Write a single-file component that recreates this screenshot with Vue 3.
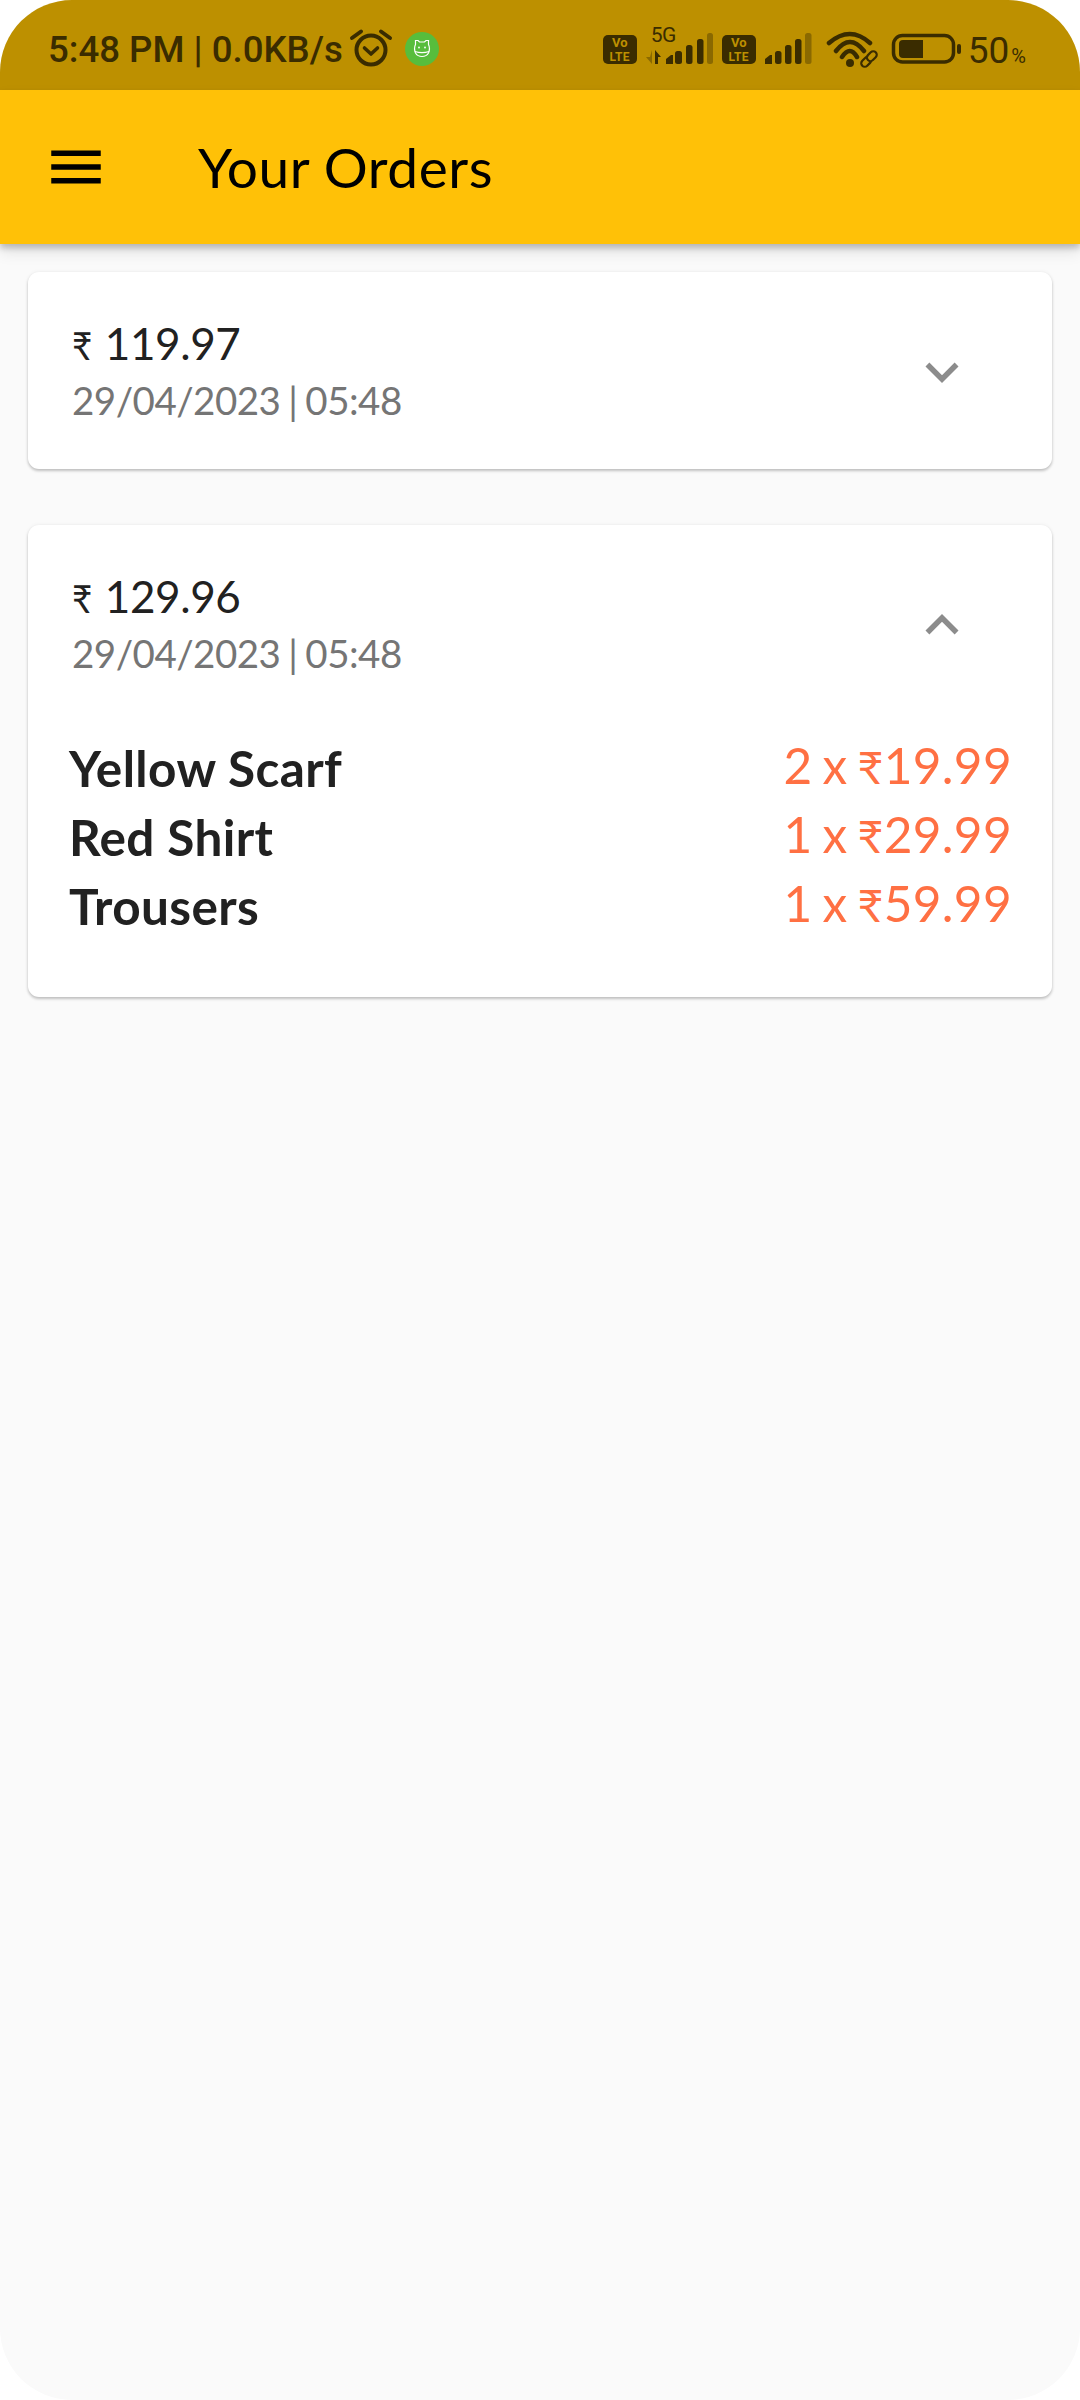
<script setup>
const orders = [
  { id: 1, amount: '119.97', date: '29/04/2023 | 05:48', open: false, items: [] },
  {
    id: 2, amount: '129.96', date: '29/04/2023 | 05:48', open: true,
    items: [
      { name: 'Yellow Scarf', qty: '2 x', price: '19.99' },
      { name: 'Red Shirt', qty: '1 x', price: '29.99' },
      { name: 'Trousers', qty: '1 x', price: '59.99' },
    ],
  },
]
</script>

<template>
  <div class="screen">
    <div class="status">
      <span class="clock">5:48 PM | 0.0KB/s</span>
      <svg class="alarm" viewBox="0 0 46 40" width="46" height="40">
        <circle cx="23" cy="22" r="14.5" fill="none" stroke="#3a2c00" stroke-width="4" />
        <path d="M16.5 20l6.5 6 6.5-6" fill="none" stroke="#3a2c00" stroke-width="3.6" stroke-linecap="round" stroke-linejoin="round" />
        <path d="M4 10L13 3.5M42 10L33 3.5" fill="none" stroke="#3a2c00" stroke-width="4" stroke-linecap="round" />
      </svg>
      <svg class="notif" viewBox="0 0 34 34" width="34" height="34">
        <circle cx="17" cy="17" r="17" fill="#57bd3c" />
        <path d="M10.500 12.500V8.500h2.500l1.500 1.500h5l1.500-1.500h2.500v4c1 2 1 6 0 8.500-1.500 2.500-3.500 3.500-6.500 3.500s-5-1-6.500-3.500c-1-2.500-1-6.500 0-8.500z" fill="none" stroke="#fff" stroke-width="1.200" />
        <path d="M9.800 19.500c4 1.300 10.400 1.300 14.400 0" fill="none" stroke="#fff" stroke-width="1.100" />
        <circle cx="14" cy="15.500" r="0.900" fill="#fff" />
        <circle cx="20" cy="15.500" r="0.900" fill="#fff" />
      </svg>

      <div class="status-right">
        <div class="volte"><span class="vo">Vo</span><span class="lte">LTE</span></div>
        <div class="signal-wrap">
          <span class="five-g">5G</span>
          <svg viewBox="0 0 67 34" width="67" height="34">
            <path d="M6 20v14L0 27h4z" fill="#8a6900" />
            <path d="M9 34V20l6 7h-3v7z" fill="#3a2c00" />
            <path d="M20 29l5-4h2v9h-7z" fill="#3a2c00" />
            <rect x="29" y="21" width="7" height="13" rx="2.500" fill="#3a2c00" />
            <rect x="40" y="15" width="6.500" height="19" rx="2.500" fill="#3a2c00" />
            <rect x="51" y="9" width="6.500" height="25" rx="2.500" fill="#3a2c00" />
            <rect x="61" y="3" width="6" height="31" rx="2.500" fill="#8a6900" />
          </svg>
        </div>
        <div class="volte"><span class="vo">Vo</span><span class="lte">LTE</span></div>
        <svg class="signal2" viewBox="0 0 47 34" width="47" height="34">
          <path d="M0 29l5-4h2v9H0z" fill="#3a2c00" />
          <rect x="10" y="21" width="6.500" height="13" rx="2.500" fill="#3a2c00" />
          <rect x="20" y="15" width="6.500" height="19" rx="2.500" fill="#3a2c00" />
          <rect x="30" y="9" width="6.500" height="25" rx="2.500" fill="#3a2c00" />
          <rect x="40" y="3" width="6.500" height="31" rx="2.500" fill="#8a6900" />
        </svg>
        <svg class="wifi" viewBox="0 0 56 40" width="56" height="40">
          <path d="M4 13Q25-5 45 13M11 21Q25 3 39 21M17 27Q25 15 32 27" fill="none" stroke="#3a2c00" stroke-width="4.500" stroke-linecap="round" />
          <circle cx="25" cy="33" r="4" fill="#3a2c00" />
          <g transform="rotate(-45 44 29)" fill="#bd9000" stroke="#3a2c00" stroke-width="2.200">
            <rect x="34.500" y="25.500" width="11" height="7" rx="3.500" />
            <rect x="42.500" y="25.500" width="11" height="7" rx="3.500" />
          </g>
        </svg>
        <svg class="battery" viewBox="0 0 71 34" width="71" height="34">
          <rect x="3.500" y="5.500" width="60" height="26.500" rx="9" fill="none" stroke="#3a2c00" stroke-width="3.500" />
          <path d="M13 10h20v18H13a4 4 0 0 1-4-4V14a4 4 0 0 1 4-4z" fill="#3a2c00" />
          <rect x="67" y="14" width="4" height="10" rx="2" fill="#3a2c00" />
        </svg>
        <span class="level">50<small>%</small></span>
      </div>
    </div>

    <header class="appbar">
      <svg class="menu" viewBox="0 0 24 24" width="66" height="66">
        <path d="M3 18h18v-2H3v2zm0-5h18v-2H3v2zm0-7v2h18V6H3z" fill="#000" />
      </svg>
      <h1 class="title">Your Orders</h1>
    </header>

    <main class="list">
      <section v-for="order in orders" :key="order.id" class="card">
        <div class="tile">
          <div class="tile-text">
            <div class="amount"><span class="rupee">₹</span> {{ order.amount }}</div>
            <div class="date">{{ order.date }}</div>
          </div>
          <svg class="chevron" viewBox="0 0 24 24" width="66" height="66">
            <path v-if="order.open" d="M12 8l-6 6 1.410 1.410L12 10.830l4.590 4.580L18 14z" fill="#8c8c8c" />
            <path v-else d="M16.590 8.590L12 13.170 7.410 8.590 6 10l6 6 6-6z" fill="#8c8c8c" />
          </svg>
        </div>
        <ul v-if="order.items.length" class="items">
          <li v-for="item in order.items" :key="item.name" class="item">
            <span class="item-name">{{ item.name }}</span>
            <span class="item-price">{{ item.qty }} <span class="rupee-lg">₹</span>{{ item.price }}</span>
          </li>
        </ul>
      </section>
    </main>
  </div>
</template>

<style scoped>
.screen {
  width: 1080px;
  height: 2400px;
  background: #fafafa;
  border-radius: 72px;
  overflow: hidden;
  font-family: Lato, "Noto Sans", sans-serif;
  position: relative;
}
.status {
  height: 90px;
  box-sizing: border-box;
  background: #bd9000;
  display: flex;
  align-items: center;
  padding: 8px 54px 0 48px;
  color: #3a2c00;
  font-family: Roboto, sans-serif;
}
.clock {
  font-size: 36.6px;
  font-weight: 500;
  white-space: nowrap;
}
.alarm {
  margin-left: 5px;
  flex: none;
  margin-top: -2px;
}
.notif {
  margin-left: 11px;
  flex: none;
}
.status-right {
  margin-left: auto;
  display: flex;
  align-items: flex-end;
  height: 34px;
  margin-top: -4px;
}
.volte {
  width: 34px;
  height: 29px;
  background: #3a2c00;
  border-radius: 5px;
  color: #bd9000;
  display: flex;
  flex-direction: column;
  align-items: center;
  justify-content: center;
  font-family: Roboto, sans-serif;
  font-weight: 700;
  line-height: normal;
  margin-right: 9px;
}
.vo { font-size: 13px; }
.lte { font-size: 12px; letter-spacing: 0.4px; }
.signal-wrap {
  position: relative;
  width: 67px;
  height: 34px;
  margin-right: 9px;
}
.signal-wrap svg { display: block; }
.five-g {
  position: absolute;
  left: 5px;
  top: -5px;
  font-size: 21px;
  line-height: 20px;
  letter-spacing: -0.5px;
}
.signal2 { margin-right: 13px; display: block; flex: none; }
.wifi { margin-right: 9px; margin-bottom: -6px; display: block; flex: none; }
.battery { margin-right: 7px; display: block; flex: none; }
.level {
  font-size: 37px;
  line-height: 30px;
  font-weight: 400;
  white-space: nowrap;
  margin-bottom: -7px;
}
.level small {
  font-size: 20px;
  margin-left: 2px;
}
.appbar {
  height: 154px;
  background: #ffc107;
  box-shadow: 0 4px 6px rgba(0, 0, 0, 0.2), 0 8px 14px rgba(0, 0, 0, 0.1);
  display: flex;
  align-items: center;
  padding-left: 43px;
  position: relative;
}
.menu { flex: none; }
.title {
  margin: 0 0 0 89px;
  font-size: 55px;
  font-weight: 400;
  line-height: 66px;
  letter-spacing: 0.55px;
  color: #000;
}
.list {
  padding: 28px 28px 0;
  display: flex;
  flex-direction: column;
  gap: 56px;
}
.card {
  background: #fff;
  border-radius: 11px;
  box-shadow: 0 2px 3px rgba(0, 0, 0, 0.22), 0 0 4px rgba(0, 0, 0, 0.06);
}
.tile {
  height: 197px;
  box-sizing: border-box;
  display: flex;
  align-items: center;
  justify-content: space-between;
  padding: 0 77px 1px 44px;
}
.amount {
  font-size: 44px;
  line-height: 53px;
  color: #212121;
  letter-spacing: -0.4px;
}
.rupee {
  display: inline-block;
  font-size: 0.88em;
  transform: scaleX(0.9);
  transform-origin: left center;
}
.rupee-lg {
  font-size: 0.9em;
}
.date {
  font-size: 38.5px;
  line-height: 46px;
  color: #757575;
  margin-top: 5px;
  letter-spacing: -0.5px;
  word-spacing: -1.5px;
}
.chevron { flex: none; margin-top: 4px; }
.items {
  list-style: none;
  margin: 12px 0 0;
  padding: 0 40px 56px 41px;
}
.item {
  display: flex;
  justify-content: space-between;
  align-items: baseline;
  height: 69px;
  line-height: 69px;
}
.item-name {
  font-size: 49.5px;
  font-weight: 700;
  color: #212121;
  letter-spacing: 0.38px;
}
.item-price {
  font-size: 49.5px;
  color: #ff7043;
  position: relative;
  top: -3px;
  letter-spacing: 0.35px;
  word-spacing: -3px;
}
</style>

<style>
html, body { margin: 0; background: #fff; }
</style>
